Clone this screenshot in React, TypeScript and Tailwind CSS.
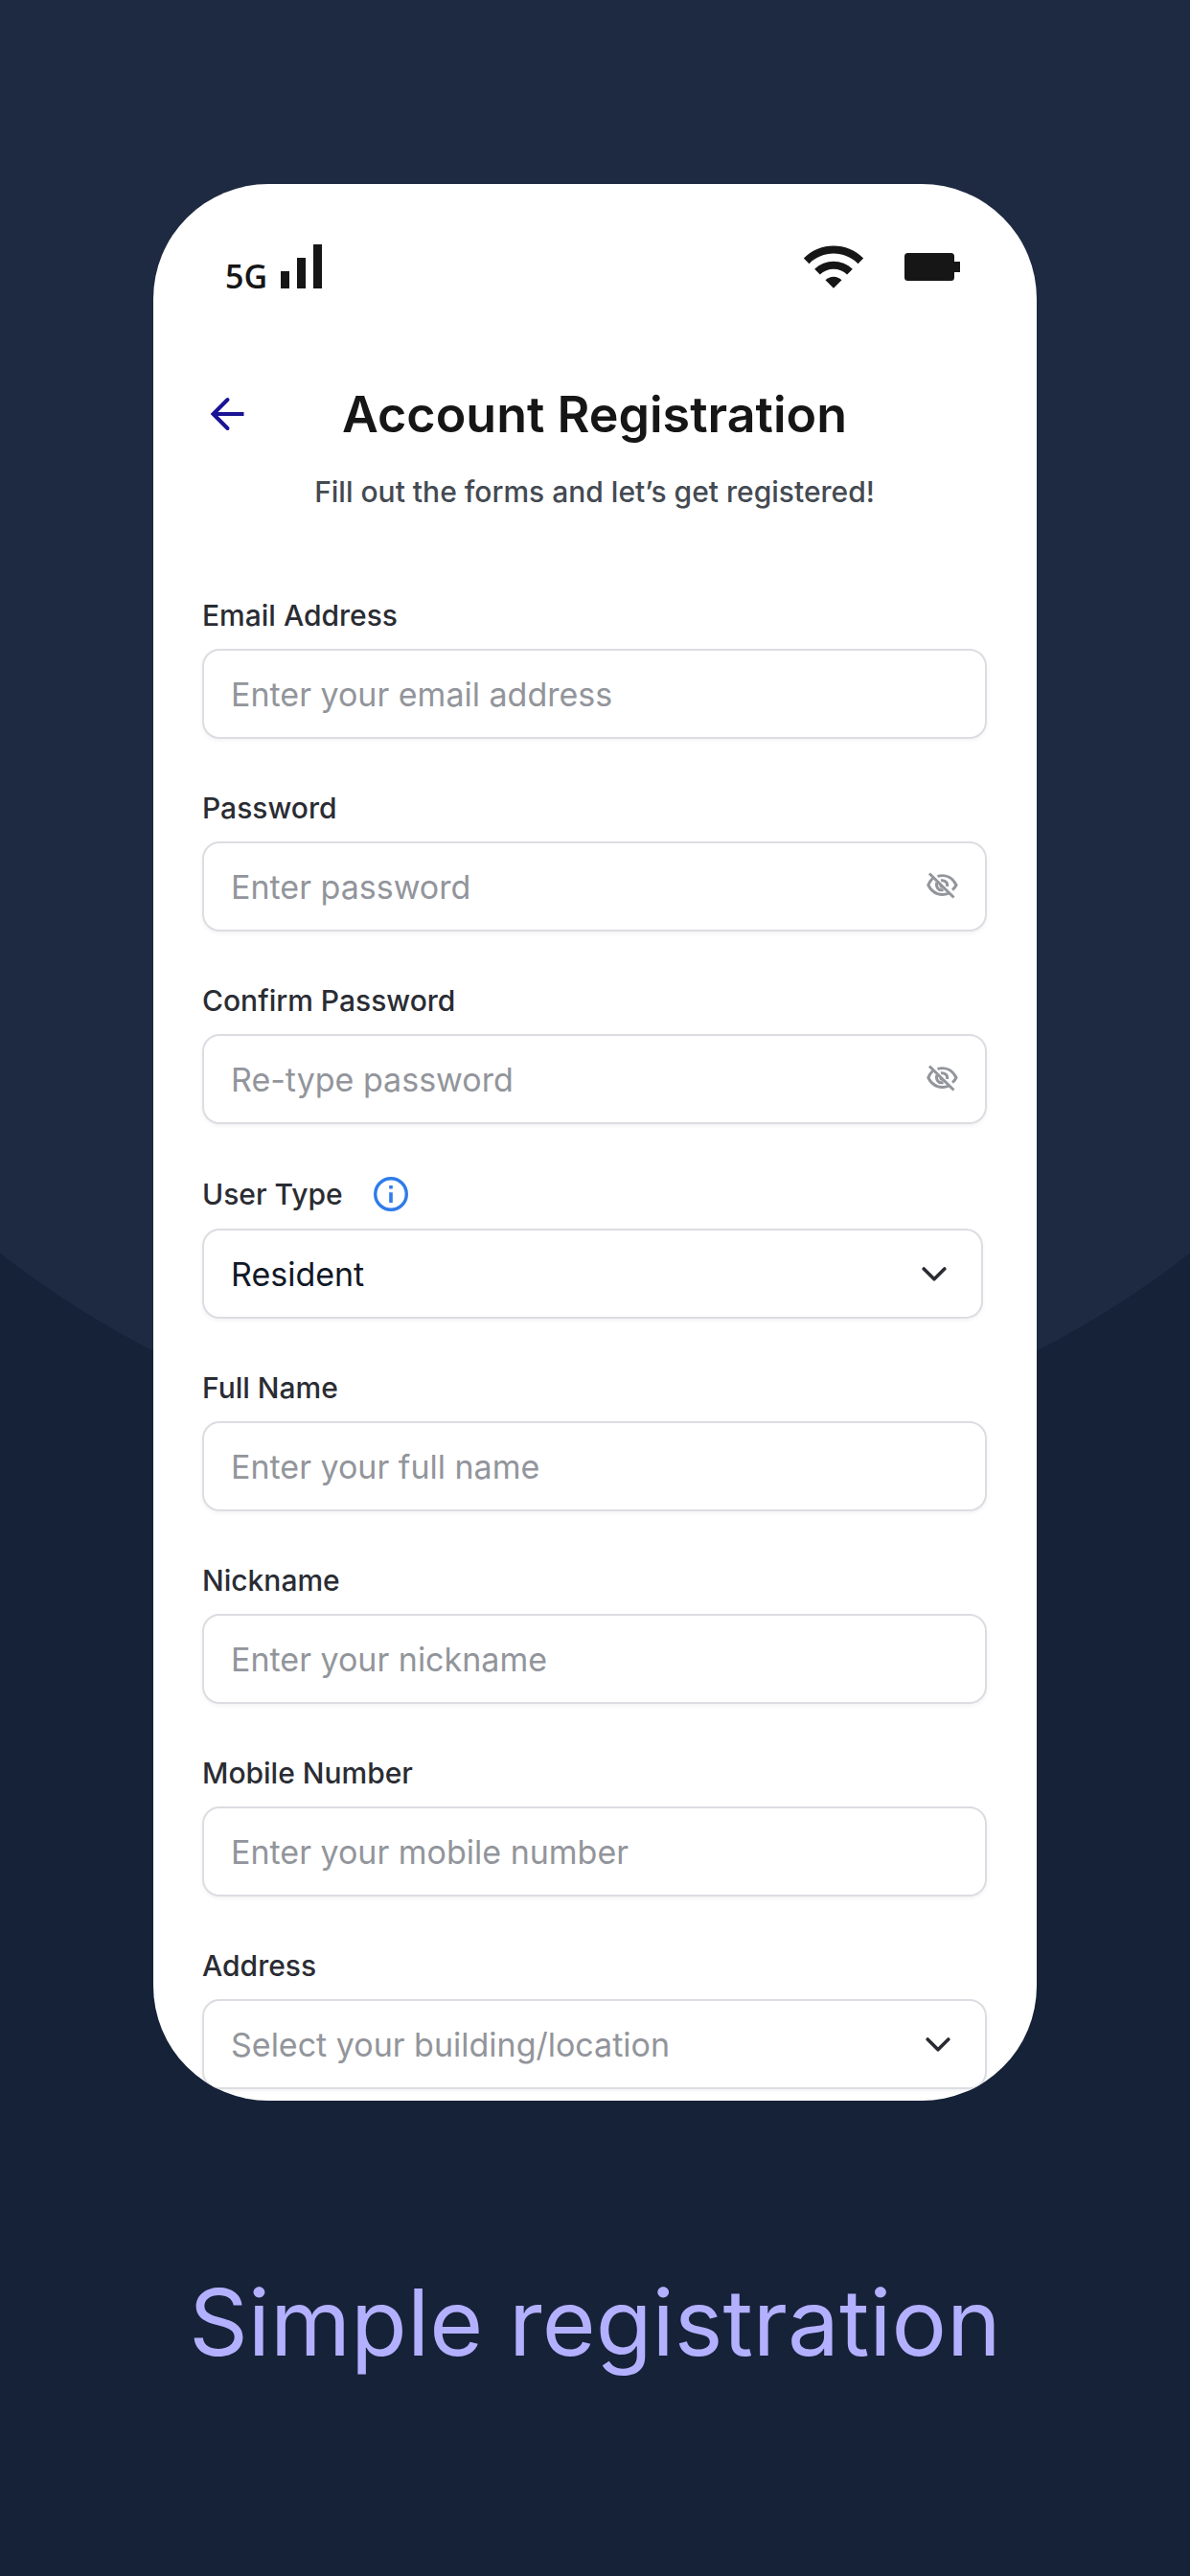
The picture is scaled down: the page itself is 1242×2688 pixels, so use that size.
import type { ReactNode } from "react";

const boxClass =
  "h-[94px] w-full rounded-[18px] border-2 border-[#dcdde2] bg-white pl-7 text-[34px] shadow-[0_2px_4px_rgba(0,0,0,0.05)] outline-none";

function SignalIcon() {
  return (
    <svg className="h-[46px] w-[44px]" viewBox="0 0 44 46" fill="#161616" aria-hidden="true">
      <rect x="0" y="28" width="9" height="18" />
      <rect x="17" y="14" width="9" height="32" />
      <rect x="34" y="0" width="9" height="46" />
    </svg>
  );
}

function WifiIcon() {
  return (
    <svg className="size-[68px]" viewBox="0 0 24 24" fill="#161616" aria-hidden="true">
      <path d="M1 9l2 2c4.97-4.97 13.03-4.97 18 0l2-2C16.93 2.93 7.08 2.93 1 9zm8 8l3 3 3-3c-1.65-1.66-4.34-1.66-6 0zm-4-4l2 2c2.76-2.76 7.24-2.76 10 0l2-2C15.14 9.14 8.87 9.14 5 13z" />
    </svg>
  );
}

function BatteryIcon() {
  return (
    <svg className="h-[29px] w-[58px]" viewBox="0 0 58 29" fill="#161616" aria-hidden="true">
      <rect width="52" height="29" rx="3.5" />
      <rect x="50" y="9" width="8" height="11" />
    </svg>
  );
}

function BackIcon() {
  return (
    <svg className="size-[36px]" viewBox="0 0 36 36" fill="none" stroke="#1a1394" strokeWidth="4" aria-hidden="true">
      <path d="M18.500 3L3.500 18l15 15" strokeLinecap="round" />
      <path d="M3.500 18h32" />
    </svg>
  );
}

function EyeOffIcon() {
  return (
    <svg className="h-[28px] w-[34px]" viewBox="0 0 34 28" fill="none" stroke="#92959b" strokeWidth="3" aria-hidden="true">
      <path d="M4 1.500L29.500 26.500" />
      <path d="M12.500 4.400C21 2 28 5.500 32 13.500C31 15.600 29.700 17.300 28 18.600" />
      <path d="M7.500 6.500C5.500 8.300 4 10.500 2.800 13.500C7.500 23 16.500 25.500 24.500 22" />
      <path d="M16 8.800C20 8 23.500 11 22.500 15" />
      <path d="M11.800 11C10.500 16 14 20 18.500 18.500" />
      <path d="M15.500 13C15 15 16 16 18 15.500" strokeWidth="2" />
    </svg>
  );
}

function InfoIcon() {
  return (
    <svg className="size-[36px]" viewBox="0 0 36 36" fill="none" aria-hidden="true">
      <circle cx="18" cy="18" r="16.300" stroke="#2f7ce9" strokeWidth="3.400" />
      <path d="M16.200 9h3.600v3.600h-3.600zM16.200 16.200h3.600v10.800h-3.600z" fill="#2f7ce9" />
    </svg>
  );
}

function ChevronIcon() {
  return (
    <svg
      className="pointer-events-none absolute top-10 right-[38px] h-[15px] w-[26px]"
      viewBox="0 0 26 15"
      fill="none"
      stroke="#2a2c33"
      strokeWidth="3.600"
      strokeLinecap="round"
      strokeLinejoin="round"
      aria-hidden="true"
    >
      <path d="M2.200 2L13 12.800L23.800 2" />
    </svg>
  );
}

type FieldProps = {
  id: string;
  label: string;
  extra?: ReactNode;
  children: ReactNode;
};

function Field({ id, label, extra, children }: FieldProps) {
  return (
    <div className="flex flex-col gap-4">
      <div className="flex items-center gap-[30px]">
        <label htmlFor={id} className="text-[30px] leading-[38px] font-medium text-[#2a2c33]">
          {label}
        </label>
        {extra}
      </div>
      {children}
    </div>
  );
}

type TextFieldProps = {
  id: string;
  label: string;
  placeholder: string;
  type?: string;
};

function TextField({ id, label, placeholder, type = "text" }: TextFieldProps) {
  return (
    <Field id={id} label={label}>
      <div className="relative">
        <input
          id={id}
          type={type}
          placeholder={placeholder}
          className={`${boxClass} pr-24 text-[#111827] placeholder:text-[#92959b]`}
        />
        {type === "password" && (
          <button type="button" aria-label="Show password" className="absolute top-8 right-[30px]">
            <EyeOffIcon />
          </button>
        )}
      </div>
    </Field>
  );
}

export default function App() {
  return (
    <div className="relative min-h-screen overflow-hidden bg-[#162238] px-40 pt-48 pb-40 font-['Inter',sans-serif]">
      {/* backdrop circle */}
      <div className="absolute -top-[501px] left-1/2 size-[2022px] -translate-x-1/2 rounded-full bg-[#1e2a41]" />

      <main className="relative overflow-hidden rounded-[120px] bg-white pr-[52px] pb-3 pl-[51px]">
        <div className="flex items-center justify-between pt-[52px] pr-7 pl-6">
          <div className="flex items-end gap-[14px] text-[#161616]">
            <span className="font-['Open_Sans',sans-serif] text-[34px] leading-[26px] font-semibold">5G</span>
            <SignalIcon />
          </div>
          <div className="flex items-center gap-10">
            <WifiIcon />
            <BatteryIcon />
          </div>
        </div>

        <header className="pt-[89px] text-center">
          <div className="relative">
            <a href="#back" aria-label="Back" className="absolute top-[13px] left-2">
              <BackIcon />
            </a>
            <h1 className="text-[52px] leading-[64px] font-semibold text-[#161616]">Account Registration</h1>
          </div>
          <p className="mt-[29px] text-[30px] leading-[38px] font-medium text-[#444a52]">
            Fill out the forms and let’s get registered!
          </p>
        </header>

        <form className="mt-[91px] flex flex-col gap-[53px]">
          <TextField id="email" label="Email Address" placeholder="Enter your email address" type="email" />
          <TextField id="password" label="Password" placeholder="Enter password" type="password" />
          <TextField id="confirm" label="Confirm Password" placeholder="Re-type password" type="password" />
          <Field
            id="user-type"
            label="User Type"
            extra={
              <button type="button" aria-label="About user types" className="flex size-10 items-center justify-center">
                <InfoIcon />
              </button>
            }
          >
            <div className="relative mr-1">
              <select id="user-type" className={`${boxClass} appearance-none text-[#111827]`}>
                <option>Resident</option>
              </select>
              <ChevronIcon />
            </div>
          </Field>
          <TextField id="full-name" label="Full Name" placeholder="Enter your full name" />
          <TextField id="nickname" label="Nickname" placeholder="Enter your nickname" />
          <TextField id="mobile" label="Mobile Number" placeholder="Enter your mobile number" type="tel" />
          <Field id="address" label="Address">
            <div className="relative">
              <select id="address" className={`${boxClass} appearance-none text-[#92959b]`}>
                <option>Select your building/location</option>
              </select>
              <ChevronIcon />
            </div>
          </Field>
        </form>
      </main>

      <h2 className="relative mt-[159px] text-center text-[96px] leading-[144px] whitespace-nowrap text-[#b3b0ff]">
        Simple registration
      </h2>
    </div>
  );
}
